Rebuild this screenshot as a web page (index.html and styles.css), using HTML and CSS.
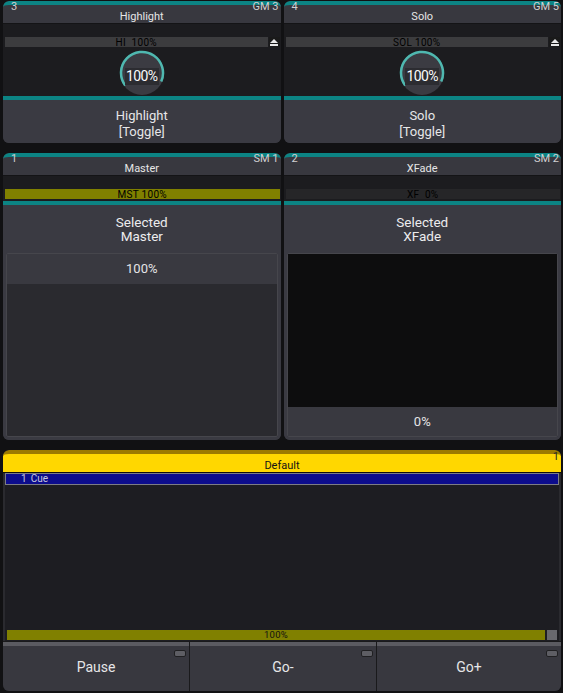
FILE: index.html
```html
<!DOCTYPE html>
<html>
<head>
<meta charset="utf-8">
<link rel="stylesheet" href="styles.css">
</head>
<body>
<div class="page">
  <div class="row row-top">
    <section class="panel exec">
      <div class="head"><span class="num">3</span><span class="tag">GM 3</span><div class="title">Highlight</div></div>
      <div class="body">
        <div class="fader-row"><div class="fader">HI&nbsp; 100%</div><div class="eject"><svg width="8" height="7" viewBox="0 0 8 7"><path d="M4 0 L8 4 L0 4 Z" fill="#e8e8e8"/><rect x="0" y="5" width="8" height="2" fill="#e8e8e8"/></svg></div></div>
        <div class="knob">
          <svg width="46" height="46" viewBox="0 0 46 46"><circle cx="23" cy="23" r="22" fill="#3b3b42"/><path d="M6.2 35.5 A21 21 0 1 1 42.2 31.5" fill="none" stroke="#4fb8b0" stroke-width="2.5"/></svg>
          <div class="knob-val">100%</div>
        </div>
      </div>
      <div class="sep"></div>
      <div class="btn">Highlight<br>[Toggle]</div>
    </section>
    <section class="panel exec">
      <div class="head"><span class="num">4</span><span class="tag">GM 5</span><div class="title">Solo</div></div>
      <div class="body">
        <div class="fader-row"><div class="fader">SOL 100%</div><div class="eject"><svg width="8" height="7" viewBox="0 0 8 7"><path d="M4 0 L8 4 L0 4 Z" fill="#e8e8e8"/><rect x="0" y="5" width="8" height="2" fill="#e8e8e8"/></svg></div></div>
        <div class="knob">
          <svg width="46" height="46" viewBox="0 0 46 46"><circle cx="23" cy="23" r="22" fill="#3b3b42"/><path d="M6.2 35.5 A21 21 0 1 1 42.2 31.5" fill="none" stroke="#4fb8b0" stroke-width="2.5"/></svg>
          <div class="knob-val">100%</div>
        </div>
      </div>
      <div class="sep"></div>
      <div class="btn">Solo<br>[Toggle]</div>
    </section>
  </div>

  <div class="row row-mid">
    <section class="panel master">
      <div class="head"><span class="num">1</span><span class="tag">SM 1</span><div class="title">Master</div></div>
      <div class="body body-mid">
        <div class="fader-row"><div class="fader fader-olive">MST 100%</div></div>
      </div>
      <div class="sep"></div>
      <div class="main">
        <div class="sel">Selected<br>Master</div>
        <div class="box">
          <div class="box-top">100%</div>
          <div class="box-fill"></div>
        </div>
      </div>
    </section>
    <section class="panel master">
      <div class="head"><span class="num">2</span><span class="tag">SM 2</span><div class="title">XFade</div></div>
      <div class="body body-mid">
        <div class="fader-row"><div class="fader fader-dark">XF&nbsp; 0%</div></div>
      </div>
      <div class="sep"></div>
      <div class="main">
        <div class="sel">Selected<br>XFade</div>
        <div class="box">
          <div class="box-black"></div>
          <div class="box-bottom">0%</div>
        </div>
      </div>
    </section>
  </div>

  <section class="panel cuelist">
    <div class="head head-yellow"><span class="tag tag-dark">1</span><div class="title">Default</div></div>
    <div class="list">
      <div class="cue"><span>1</span><span>Cue</span></div>
    </div>
    <div class="progress-row"><div class="progress">100%</div><div class="square"></div></div>
    <div class="buttons">
      <div class="pbtn"><span>Pause</span><i class="led"></i></div>
      <div class="pbtn"><span>Go-</span><i class="led"></i></div>
      <div class="pbtn"><span>Go+</span><i class="led"></i></div>
    </div>
  </section>
</div>
</body>
</html>
```
FILE: styles.css
```css
* { box-sizing: border-box; margin: 0; padding: 0; }
html, body { width: 563px; height: 693px; overflow: hidden; }
body { background: #111113; font-family: Roboto, "Noto Sans", sans-serif; color: #e4e4e6; }

.page { display: flex; flex-direction: column; gap: 10px; padding: 1px 2px 0 3px; }
.row { display: grid; grid-template-columns: 1fr 1fr; gap: 3px; }

.panel { position: relative; display: flex; flex-direction: column; border-radius: 6px; overflow: hidden; background: #38383f; }
.exec { height: 142px; }
.master { height: 287px; }
.cuelist { height: 241px; background: #2a2a2f; }

.head { position: relative; flex: none; height: 23px; border-top: 4px solid #0c8484; border-bottom: 1px solid #141416; background: #38383f; border-radius: 6px 6px 0 0; text-align: center; }
.title { font-size: 11px; line-height: 12px; padding-top: 6px; color: #e6e6e6; }
.num, .tag { position: absolute; top: -4px; font-size: 11px; line-height: 11px; color: #d0d0d2; }
.num { left: 8px; }
.tag { right: 2px; }

.body { flex: none; height: 72px; background: #1c1c1f; display: flex; flex-direction: column; align-items: center; padding-top: 13px; }
.fader-row { display: flex; width: 100%; height: 10px; gap: 1px; padding: 0 1px 0 2px; }
.fader { flex: 1; background: #3c3c3e; color: #000; font-size: 10px; line-height: 11px; text-align: center; letter-spacing: 0.3px; }
.eject { width: 11px; background: #1a1a1a; display: flex; align-items: center; justify-content: center; }
.fader-olive { background: #808000; }
.fader-dark { background: #262628; }

.knob { position: relative; width: 46px; height: 46px; margin-top: 3px; }
.knob svg { display: block; }
.knob-val { position: absolute; left: 6px; right: 6px; top: 18px; height: 17px; background: #2c2c31; color: #fafafa; font-size: 14px; line-height: 17px; text-align: center; letter-spacing: -0.6px; }

.sep { flex: none; height: 4px; background: #0c8484; }
.btn { flex: 1; display: flex; align-items: center; justify-content: center; text-align: center; font-size: 13px; line-height: 16px; color: #e6e6e8; background: #3a3a42; padding-top: 4px; }

.body-mid { height: 25px; }
.main { flex: 1; display: flex; flex-direction: column; padding: 0 3px 3px; background: #3a3a42; }
.sel { text-align: center; font-size: 13.5px; line-height: 14.5px; padding-top: 9.5px; height: 48px; color: #ececee; }
.box { flex: 1; display: flex; flex-direction: column; border: 1px solid #46464c; border-radius: 2px; background: #2a2a2f; }
.box-top { height: 30px; background: #393940; text-align: center; font-size: 13px; line-height: 30px; }
.box-fill { flex: 1; }
.box-black { flex: 1; background: #0d0d0e; }
.box-bottom { height: 29px; background: #393940; text-align: center; font-size: 13px; line-height: 29px; }

.head-yellow { border-top-color: #9c7a00; background: #ffd700; border-bottom-color: #0e0e0e; height: 23px; }
.head-yellow .title { color: #141414; }
.tag-dark { color: #2a2a2a; top: -3px; right: 2px; }

.list { flex: 1; margin: 0 2px; background: #1d1d22; display: flex; flex-direction: column; }
.cue { height: 12px; border: 1px solid #7c7c84; background: #0c0c8c; color: #c8c8dc; font-size: 10px; line-height: 10px; padding-left: 15px; display: flex; gap: 4px; }

.progress-row { flex: none; display: flex; gap: 2px; height: 13px; padding: 2px 2px 1px; background: #1d1d22; margin: 0 2px; }
.progress { flex: 1; background: #808000; color: #101010; font-size: 9.5px; line-height: 10px; text-align: center; letter-spacing: 0.3px; }
.square { width: 10px; background: #68686e; }

.buttons { flex: none; height: 50px; display: grid; grid-template-columns: 186px 186px 1fr; gap: 1px; background: #1a1a1c; border-top: 1px solid #1a1a1c; }
.pbtn { position: relative; display: flex; align-items: center; justify-content: center; background: #38383f; border-top: 4px solid #5b5b61; font-size: 14px; color: #e6e6e8; padding-bottom: 4px; }
.led { position: absolute; top: 4px; right: 3px; width: 12px; height: 7px; border-radius: 2px; background: #5e5e64; border: 1px solid #202022; }
```
